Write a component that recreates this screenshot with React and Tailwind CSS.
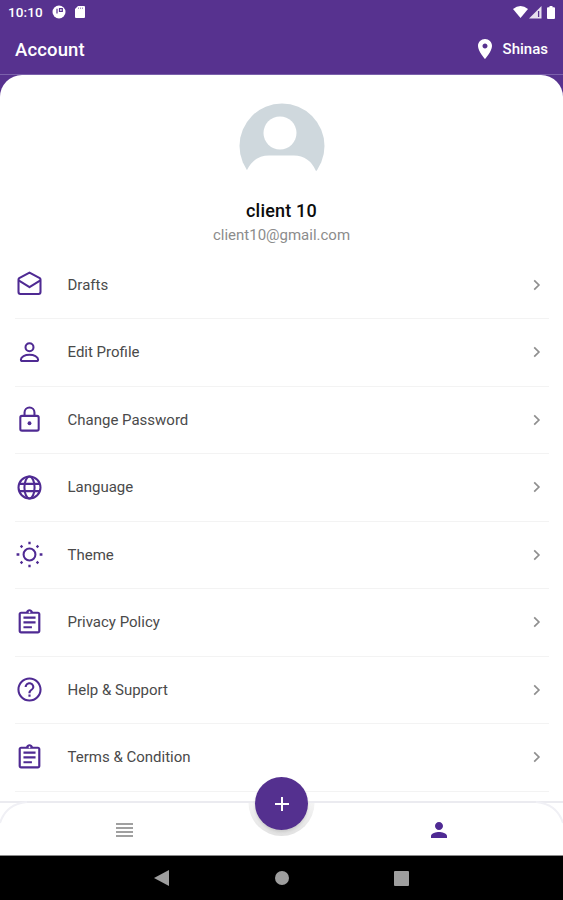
import React from "react";

const FONT = "font-['Roboto','Liberation_Sans',sans-serif]";

const ICONS = {
  clipboard:
    "M7 15h7v1.800H7zm0-4h10v1.800H7zm0-4h10v1.800H7zm12-4h-4.180C14.400 1.840 13.300 1 12 1c-1.300 0-2.400.840-2.820 2H5c-1.100 0-2 .900-2 2v14c0 1.100.900 2 2 2h14c1.100 0 2-.900 2-2V5c0-1.100-.900-2-2-2zm-7-.250c.410 0 .750.340.750.750s-.340.750-.750.750-.750-.340-.750-.750.340-.750.750-.750zM19.200 19.200H4.800V4.800h14.400v14.400z",
  help:
    "M11.100 18h1.800v-1.900h-1.800v1.900zm.9-16C6.480 2 2 6.480 2 12s4.480 10 10 10 10-4.480 10-10S17.520 2 12 2zm0 18.300c-4.580 0-8.300-3.720-8.300-8.300S7.420 3.700 12 3.700s8.300 3.720 8.300 8.300-3.720 8.300-8.300 8.300zm0-14.300c-2.210 0-4 1.790-4 4h1.700c0-1.270 1.030-2.300 2.300-2.300s2.300 1.030 2.300 2.300c0 2-3.200 1.950-3.200 5h1.800c0-2.250 3.100-2.500 3.100-5 0-2.210-1.790-4-4-4z",
};

function PathIcon({ d }) {
  return (
    <svg viewBox="0 0 24 24" className="size-[29px] shrink-0" fill="#4f2a93">
      <path d={d} fillRule="evenodd" />
    </svg>
  );
}

function StrokeIcon({ children }) {
  return (
    <svg
      viewBox="0 0 24 24"
      className="size-[29px] shrink-0"
      fill="none"
      stroke="#4f2a93"
      strokeWidth="1.700"
      strokeLinejoin="round"
    >
      {children}
    </svg>
  );
}

const DraftsIcon = () => (
  <StrokeIcon>
    <path d="M2.900 7.900Q2.900 7.200 3.500 6.800L12 2.100l8.500 4.700q.6.400.6 1.100v10.400q0 1.500-1.500 1.500H4.400q-1.500 0-1.500-1.500z" />
    <path d="M3 8.600l9 5.600 9-5.600" />
  </StrokeIcon>
);

const ProfileIcon = () => (
  <StrokeIcon>
    <circle cx="12" cy="7.600" r="3.300" />
    <path d="M4.900 17.800c0-2.400 3.400-3.900 7.100-3.900s7.100 1.500 7.100 3.900q0 1.300-1.200 1.300H6.100q-1.200 0-1.200-1.300z" />
  </StrokeIcon>
);

const LockIcon = () => (
  <StrokeIcon>
    <rect x="4.400" y="9" width="15.200" height="12.200" rx="1.400" />
    <path d="M7.900 9V6.200a4.100 4.100 0 0 1 8.200 0V9" />
    <circle cx="12" cy="15.100" r="1.600" fill="#4f2a93" stroke="none" />
  </StrokeIcon>
);

const GlobeIcon = () => (
  <StrokeIcon>
    <circle cx="12" cy="12" r="9.100" />
    <ellipse cx="12" cy="12" rx="4.200" ry="9.100" />
    <path d="M3.500 9h17M3.500 15h17" />
  </StrokeIcon>
);

const SunIcon = () => (
  <StrokeIcon>
    <circle cx="12" cy="12" r="4.900" />
    <path
      strokeWidth="1.900"
      d="M12 1.400v2.200M12 20.400v2.200M1.300 12h2.300M20.400 12h2.300M4.700 4.700l1.400 1.400M17.900 17.900l1.400 1.400M4.700 19.300l1.400-1.400M17.900 6.100l1.400-1.400"
    />
  </StrokeIcon>
);

const ROWS = [
  { label: "Drafts", icon: <DraftsIcon /> },
  { label: "Edit Profile", icon: <ProfileIcon /> },
  { label: "Change Password", icon: <LockIcon /> },
  { label: "Language", icon: <GlobeIcon /> },
  { label: "Theme", icon: <SunIcon /> },
  { label: "Privacy Policy", icon: <PathIcon d={ICONS.clipboard} /> },
  { label: "Help & Support", icon: <PathIcon d={ICONS.help} /> },
  { label: "Terms & Condition", icon: <PathIcon d={ICONS.clipboard} /> },
];

function StatusBar() {
  return (
    <div className="flex h-6 items-center justify-between pl-2 pr-[7px] text-white">
      <div className="flex items-center">
        <span className="w-[44px] text-[13.500px] font-medium leading-6 tracking-[0.1px]">10:10</span>
        <svg viewBox="0 0 14 14" className="size-[14px]">
          <circle cx="7" cy="7" r="6.500" fill="#fff" />
          <path d="M5 3.800v4.800M7.500 3.600h2.800v2.800h-2.800z" fill="none" stroke="#57328f" strokeWidth="1.200" />
        </svg>
        <svg viewBox="0 0 12 12" className="ml-2 size-3" fill="#fff">
          <path d="M4 0h6q1 0 1 1v10q0 1-1 1H2q-1 0-1-1V3z" />
          <path d="M4.500 1.500v1.500M6.500 1.500v1.500M8.500 1.500v1.500" stroke="#57328f" strokeWidth=".5" />
        </svg>
      </div>
      <div className="flex items-center">
        <svg viewBox="0 0 15 12" className="h-3 w-[15px]" fill="#fff">
          <path d="M0 3Q7.500-3 15 3L7.500 12z" />
        </svg>
        <svg viewBox="0 0 13 13" className="ml-px h-[13px] w-[13px]">
          <path d="M0 12.500L12.500 0v12.500z" fill="#fff" opacity=".85" />
          <path d="M9.600 5v6" stroke="#57328f" strokeWidth="1.300" />
        </svg>
        <svg viewBox="0 0 8 13" className="ml-[5px] mr-px h-[13px] w-2" fill="#fff">
          <path d="M2.500 0h3v1.300H7q1 0 1 1V12q0 1-1 1H1q-1 0-1-1V2.300q0-1 1-1h1.500z" />
        </svg>
      </div>
    </div>
  );
}

function AppBar() {
  return (
    <header className="flex h-[51px] items-center justify-between border-b border-[#7b61ab] px-[15px] text-white">
      <h1 className="pt-[3px] text-[18.500px] font-medium tracking-[0.15px]">Account</h1>
      <div className="flex items-center">
        <svg viewBox="5 2 14 20" className="mr-[11px] h-5 w-[14px]" fill="#fff">
          <path d="M12 2C8.130 2 5 5.130 5 9c0 5.250 7 13 7 13s7-7.750 7-13c0-3.870-3.130-7-7-7zm0 9.500c-1.380 0-2.500-1.120-2.500-2.500s1.120-2.500 2.500-2.500 2.500 1.120 2.500 2.500-1.120 2.500-2.500 2.500z" />
        </svg>
        <span className="pt-px text-[15px] font-medium">Shinas</span>
      </div>
    </header>
  );
}

function Profile() {
  return (
    <section className="flex h-[176.500px] flex-col items-center pt-7">
      <svg viewBox="0 0 86 86" className="size-[86px]">
        <circle cx="43" cy="43" r="42.500" fill="#cfd8dd" />
        <circle cx="41" cy="30" r="16.500" fill="#fff" />
        <path d="M8 67Q15 52.500 30 52.500H55Q70 52.500 77 68V86H8z" fill="#fff" />
      </svg>
      <h2 className="mt-[10px] text-[18px] font-medium leading-6 tracking-[0.2px] text-[#0c0c0c]">client 10</h2>
      <p className="text-[15px] leading-6 text-[#8c8c8c]">client10@gmail.com</p>
    </section>
  );
}

function MenuRow({ icon, label }) {
  return (
    <li className="mx-[14.500px] flex h-[67.500px] items-center border-b border-[#f3f3f3]">
      {icon}
      <span className="ml-6 grow text-[15px] text-[#4a4a4a]">{label}</span>
      <svg viewBox="0 0 8 12" className="mr-2 h-3 w-2" fill="none" stroke="#8f8f8f" strokeWidth="1.700">
        <path d="M1.200 1.300L5.900 6l-4.700 4.700" />
      </svg>
    </li>
  );
}

function BottomBar() {
  return (
    <div className="relative flex h-[54px] shrink-0 items-center border-t-2 border-[#ebebf0] bg-white">
      <svg viewBox="0 0 563 54" className="absolute -top-[2px] left-0 h-[54px] w-full" fill="none">
        <defs>
          <linearGradient id="notch" x1="0" y1="0" x2="0" y2="1">
            <stop offset="0" stopColor="#f4f4f4" />
            <stop offset="1" stopColor="#e2e2e2" />
          </linearGradient>
        </defs>
        <path d="M0 22Q6 3 27 1M563 22Q557 3 536 1" stroke="#f0f0f5" strokeWidth="2" />
        <path d="M248.500 2A33 33 0 0 0 314.500 2z" fill="url(#notch)" />
      </svg>
      <button className="absolute -top-[26px] left-[255px] flex size-[53px] items-center justify-center rounded-full bg-[#54308f] shadow-[0_2px_3px_rgba(0,0,0,0.12)]">
        <svg viewBox="0 0 14 14" className="size-[14px]" stroke="#fff" strokeWidth="2">
          <path d="M7 0v14M0 7h14" />
        </svg>
      </button>
      <div className="ml-[116px] mt-px flex h-[14px] w-[17px] flex-col justify-between">
        <span className="h-[2px] bg-[#a0a0a0]" />
        <span className="h-[2px] bg-[#a0a0a0]" />
        <span className="h-[2px] bg-[#a0a0a0]" />
        <span className="h-[2px] bg-[#a0a0a0]" />
      </div>
      <svg viewBox="4 4 16 16" className="ml-[298px] mt-px size-4" fill="#4f2a93">
        <path d="M12 12c2.210 0 4-1.790 4-4s-1.790-4-4-4-4 1.790-4 4 1.790 4 4 4zm0 2c-2.670 0-8 1.340-8 4v2h16v-2c0-2.660-5.330-4-8-4z" />
      </svg>
    </div>
  );
}

function SystemNav() {
  return (
    <div className="flex h-[45px] shrink-0 items-center border-t border-[#8a8a8a] bg-black pl-[154px]">
      <svg viewBox="0 0 15 16" className="h-4 w-[15px]" fill="#9e9e9e">
        <path d="M0 8L15 0v16z" />
      </svg>
      <span className="ml-[106px] size-[14px] rounded-full bg-[#9e9e9e]" />
      <span className="ml-[105px] h-[15px] w-[15px] rounded-[1px] bg-[#9e9e9e]" />
    </div>
  );
}

export default function App() {
  return (
    <div className={`flex h-[900px] w-[563px] flex-col overflow-hidden bg-[#57328f] ${FONT}`}>
      <StatusBar />
      <AppBar />
      <main className="min-h-0 flex-1 overflow-hidden rounded-t-[22px] bg-white">
        <Profile />
        <ul>
          {ROWS.map((row) => (
            <MenuRow key={row.label} {...row} />
          ))}
        </ul>
      </main>
      <BottomBar />
      <SystemNav />
    </div>
  );
}
